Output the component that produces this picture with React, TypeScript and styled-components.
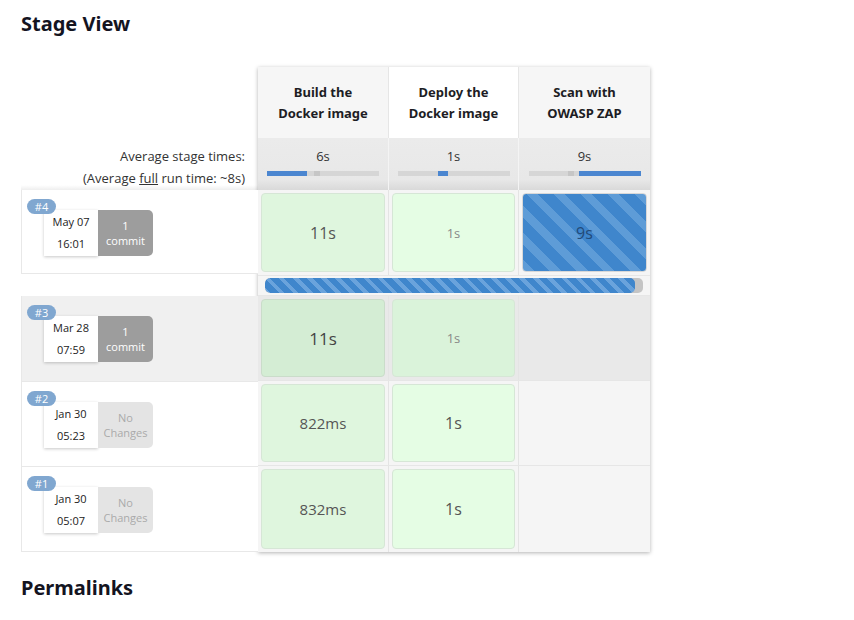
import styled, { createGlobalStyle, css } from "styled-components";

const GlobalStyle = createGlobalStyle`
  body {
    margin: 0;
    background: #ffffff;
    font-family: "Open Sans", "Noto Sans", sans-serif;
    color: #333;
  }
`;

const Page = styled.div`
  padding: 10px 0 0 21px;
  width: 833px;
`;

const Heading = styled.h2<{ $gap?: number }>`
  margin: ${(p) => p.$gap || 0}px 0 0;
  font-family: "Noto Sans", sans-serif;
  font-size: 20px;
  font-weight: 700;
  color: #14141f;
  line-height: 28px;
`;

const Table = styled.div`
  display: flex;
  margin-top: 29px;
`;

const RunColumn = styled.div`
  width: 237px;
  display: flex;
  flex-direction: column;
`;

const AvgLabel = styled.div`
  height: 123px;
  display: flex;
  flex-direction: column;
  justify-content: flex-end;
  align-items: flex-end;
  padding: 0 13px 1px 0;
  box-sizing: border-box;
  font-size: 13px;
  line-height: 22px;
  color: #333;
  background: linear-gradient(to bottom, #fff 0, #fff 96%, #eee 100%);

  u {
    text-decoration: underline;
  }
`;

const RunRow = styled.div<{ $active?: boolean; $h: number }>`
  position: relative;
  height: ${(p) => p.$h}px;
  box-sizing: border-box;
  border: 1px solid #e8e8e8;
  border-right: none;
  border-top: none;
  background: ${(p) => (p.$active ? "#f0f0f0" : "#fff")};
  &:first-of-type {
    border-top: 1px solid #e8e8e8;
  }
`;

const Gap = styled.div`
  height: 22px;
`;

const Badge = styled.span`
  position: absolute;
  left: 5px;
  top: 9px;
  z-index: 2;
  width: 29px;
  height: 15px;
  border-radius: 8px;
  background: #80a7d0;
  color: #fff;
  font-size: 11px;
  line-height: 15px;
  text-align: center;
`;

const RunInfo = styled.div`
  display: flex;
  position: absolute;
  left: 22px;
  top: 20px;
`;

const DateBox = styled.div`
  width: 54px;
  height: 46px;
  background: #fff;
  box-shadow: 0 1px 3px rgba(0, 0, 0, 0.22);
  display: flex;
  flex-direction: column;
  justify-content: center;
  align-items: center;
  font-size: 11px;
  line-height: 22px;
  color: #222;
`;

const Changes = styled.div<{ $has: boolean }>`
  width: 55px;
  height: 46px;
  border-radius: 0 5px 5px 0;
  display: flex;
  flex-direction: column;
  justify-content: center;
  align-items: center;
  font-size: 11px;
  line-height: 15px;
  ${(p) =>
    p.$has
      ? css`
          background: #9d9d9d;
          color: #fff;
        `
      : css`
          background: #e4e4e4;
          color: #aaa;
        `}
`;

const StagePanel = styled.div`
  width: 392px;
  box-shadow: 0 1px 4px rgba(0, 0, 0, 0.3);
  display: flex;
  flex-direction: column;
  background: #f5f5f5;
`;

const Cols = styled.div<{ $h: number; $bg?: string; $line?: boolean }>`
  display: grid;
  grid-template-columns: 131px 130px 131px;
  height: ${(p) => p.$h}px;
  box-sizing: border-box;
  background: ${(p) => p.$bg || "transparent"};
  border-bottom: ${(p) => (p.$line ? "1px solid #e6e6e6" : "none")};
`;

const HeadCell = styled.div<{ $light?: boolean }>`
  background: ${(p) => (p.$light ? "#ffffff" : "#f6f6f6")};
  border-right: 1px solid #e6e6e6;
  display: flex;
  align-items: center;
  justify-content: center;
  text-align: center;
  font-family: "Noto Sans", sans-serif;
  font-weight: 700;
  font-size: 13px;
  line-height: 21px;
  color: #1d1d24;
  padding-top: 0;
  &:last-child {
    border-right: none;
  }
`;

const AvgCell = styled.div`
  background: linear-gradient(to bottom, #ebebeb 0, #e8e8e8 80%, #d9d9d9 100%);
  border-right: 1px solid #f4f4f4;
  display: flex;
  flex-direction: column;
  align-items: center;
  padding-top: 8px;
  box-sizing: border-box;
  font-size: 13px;
  line-height: 20px;
  color: #333;
  &:last-child {
    border-right: none;
  }
`;

const Track = styled.div`
  position: relative;
  width: 112px;
  height: 5px;
  margin-top: 5px;
  background: #d6d6d6;
`;

const Fill = styled.div`
  position: absolute;
  top: 0;
  height: 5px;
  background: #4b86d0;
`;

const Marker = styled.div`
  position: absolute;
  top: 0;
  width: 6px;
  height: 5px;
  background: #c6c6c6;
`;

const BodyCol = styled.div`
  border-right: 1px solid #e4e4e4;
  padding: 3px;
  display: flex;
  &:last-child {
    border-right: none;
  }
`;

const Cell = styled.div<{ $tone: "a" | "b" | "c" | "d" | "run"; $size: number; $faint?: boolean }>`
  flex: 1;
  border-radius: 4px;
  border: 1px solid #d6e6d6;
  display: flex;
  align-items: center;
  justify-content: center;
  font-size: ${(p) => p.$size}px;
  color: ${(p) => (p.$faint ? "#888" : "#555")};
  ${(p) =>
    p.$tone === "a" &&
    css`
      background: #dff6de;
    `}
  ${(p) =>
    p.$tone === "b" &&
    css`
      background: #e5fde4;
    `}
  ${(p) =>
    p.$tone === "c" &&
    css`
      background: #d4edd4;
      border-color: #cadcca;
      color: #444;
    `}
  ${(p) =>
    p.$tone === "d" &&
    css`
      background: #daf3da;
    `}
  ${(p) =>
    p.$tone === "run" &&
    css`
      border-color: #d8d8d8;
      background: repeating-linear-gradient(
        45deg,
        #5e9cd7 0 8px,
        #3f86cc 8px 19px
      );
      color: #234a78;
    `}
`;

const ProgressRow = styled.div`
  height: 21px;
  display: flex;
  align-items: center;
  padding: 0 7px;
  border-top: 1px solid #e6e6e6;
  border-bottom: 1px solid #e6e6e6;
  box-sizing: border-box;
`;

const Progress = styled.div`
  flex: 1;
  height: 15px;
  border-radius: 5px;
  background: #c4c4c4;
  display: flex;
  overflow: hidden;
`;

const ProgressFill = styled.div`
  width: 370px;
  border-radius: 5px;
  background: repeating-linear-gradient(
    45deg,
    #6aa3dc 0 4px,
    #3f86cc 4px 10px
  );
`;

type Run = {
  id: number;
  date: string;
  time: string;
  commits: number;
  active?: boolean;
};

const runs: Run[] = [
  { id: 4, date: "May 07", time: "16:01", commits: 1 },
  { id: 3, date: "Mar 28", time: "07:59", commits: 1, active: true },
  { id: 2, date: "Jan 30", time: "05:23", commits: 0 },
  { id: 1, date: "Jan 30", time: "05:07", commits: 0 },
];

const RunCell = ({ run, h }: { run: Run; h: number }) => (
  <RunRow $active={run.active} $h={h}>
    <Badge>#{run.id}</Badge>
    <RunInfo>
      <DateBox>
        <span>{run.date}</span>
        <span>{run.time}</span>
      </DateBox>
      <Changes $has={run.commits > 0}>
        {run.commits > 0 ? (
          <>
            <span>{run.commits}</span>
            <span>commit</span>
          </>
        ) : (
          <>
            <span>No</span>
            <span>Changes</span>
          </>
        )}
      </Changes>
    </RunInfo>
  </RunRow>
);

const avgs = [
  { label: "6s", left: 0, width: 40, marker: 47 },
  { label: "1s", left: 40, width: 10 },
  { label: "9s", left: 50, width: 62, marker: 39 },
];

const App = () => {
  return (
    <Page>
      <GlobalStyle />
      <Heading>Stage View</Heading>
      <Table>
        <RunColumn>
          <AvgLabel>
            <span>Average stage times:</span>
            <span>
              (Average <u>full</u> run time: ~8s)
            </span>
          </AvgLabel>
          <RunCell run={runs[0]} h={84} />
          <Gap />
          <RunCell run={runs[1]} h={86} />
          <RunCell run={runs[2]} h={85} />
          <RunCell run={runs[3]} h={85} />
        </RunColumn>
        <StagePanel>
          <Cols $h={71}>
            <HeadCell>
              Build the
              <br />
              Docker image
            </HeadCell>
            <HeadCell $light>
              Deploy the
              <br />
              Docker image
            </HeadCell>
            <HeadCell>
              Scan with
              <br />
              OWASP ZAP
            </HeadCell>
          </Cols>
          <Cols $h={52}>
            {avgs.map((a) => (
              <AvgCell key={a.label}>
                {a.label}
                <Track>
                  {a.marker !== undefined && <Marker style={{ left: a.marker }} />}
                  <Fill style={{ left: a.left, width: a.width }} />
                </Track>
              </AvgCell>
            ))}
          </Cols>
          <Cols $h={85}>
            <BodyCol>
              <Cell $tone="a" $size={16}>11s</Cell>
            </BodyCol>
            <BodyCol>
              <Cell $tone="b" $size={13} $faint>1s</Cell>
            </BodyCol>
            <BodyCol>
              <Cell $tone="run" $size={16}>9s</Cell>
            </BodyCol>
          </Cols>
          <ProgressRow>
            <Progress>
              <ProgressFill />
            </Progress>
          </ProgressRow>
          <Cols $h={85} $bg="#e9e9e9" $line>
            <BodyCol>
              <Cell $tone="c" $size={17}>11s</Cell>
            </BodyCol>
            <BodyCol>
              <Cell $tone="d" $size={13} $faint>1s</Cell>
            </BodyCol>
            <BodyCol />
          </Cols>
          <Cols $h={85} $line>
            <BodyCol>
              <Cell $tone="a" $size={15}>822ms</Cell>
            </BodyCol>
            <BodyCol>
              <Cell $tone="b" $size={16}>1s</Cell>
            </BodyCol>
            <BodyCol />
          </Cols>
          <Cols $h={86}>
            <BodyCol>
              <Cell $tone="a" $size={15}>832ms</Cell>
            </BodyCol>
            <BodyCol>
              <Cell $tone="b" $size={16}>1s</Cell>
            </BodyCol>
            <BodyCol />
          </Cols>
        </StagePanel>
      </Table>
      <Heading $gap={22}>Permalinks</Heading>
    </Page>
  );
};

export default App;
